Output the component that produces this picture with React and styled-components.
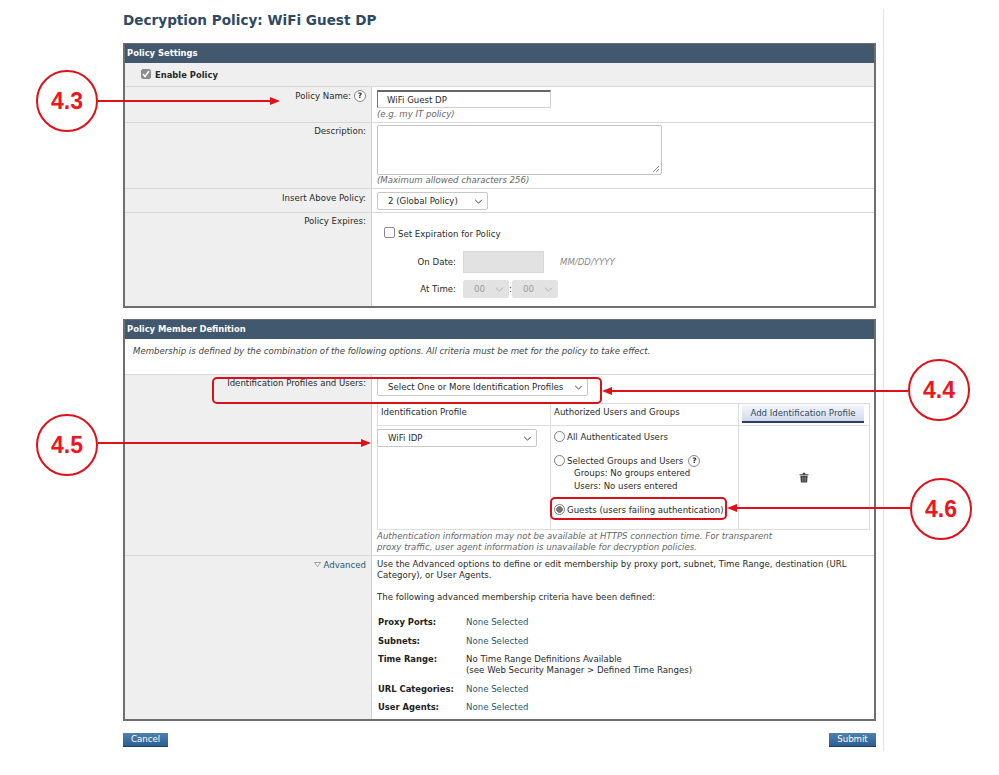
import React from "react";
import styled, { createGlobalStyle } from "styled-components";

const GlobalStyle = createGlobalStyle`
  html, body {
    margin: 0;
    background: #fff;
  }
  body {
    font-family: "DejaVu Sans", Verdana, sans-serif;
    font-size: 8.6px;
    color: #2a2a2a;
  }
`;

const Page = styled.div`
  position: relative;
  width: 999px;
  height: 775px;
  overflow: hidden;
`;

const Content = styled.div`
  width: 760px;
  min-height: 742px;
  margin-top: 9px;
  margin-left: 123px;
  border-right: 1px solid #e6e6e6;
  position: absolute;
`;

const Title = styled.h1`
  margin: 0 0 15px;
  padding-top: 3px;
  font-size: 13.6px;
  line-height: 16px;
  font-weight: bold;
  color: #2f4a63;
`;

const Panel = styled.section`
  width: 753px;
  box-sizing: border-box;
  border: 2px solid #6f6f6f;
  border-top-width: 1px;
  margin-bottom: ${(p) => p.$gap || 0}px;
`;

const PanelHead = styled.div`
  height: 19px;
  line-height: 19px;
  padding-left: 2px;
  background: #42586f;
  color: #fff;
  font-weight: bold;
  font-size: 8.4px;
`;

const EnableRow = styled.div`
  height: 24px;
  display: flex;
  align-items: center;
  gap: 4px;
  padding-left: 16px;
  padding-top: 1px;
  background: #efefef;
  border-bottom: 1px solid #d8d8d8;
  font-weight: bold;
  font-size: 8.4px;
  box-sizing: border-box;
`;

const Row = styled.div`
  display: grid;
  grid-template-columns: 247px 1fr;
  grid-template-rows: minmax(0, 1fr);
  height: ${(p) => p.$h}px;
  box-sizing: border-box;
  border-bottom: ${(p) => (p.$last ? "none" : "1px solid #d8d8d8")};
`;

const Label = styled.div`
  background: #efefef;
  border-right: 1px solid #d0d0d0;
  text-align: right;
  padding: ${(p) => p.$top || 3}px 5px 0 0;
  line-height: 11px;
  white-space: nowrap;
`;

const Field = styled.div`
  background: #fff;
  padding: ${(p) => p.$top ?? 3}px 5px 0;
  line-height: 11px;
  min-width: 0;
`;

const Help = styled.span`
  display: inline-flex;
  align-items: center;
  justify-content: center;
  width: 10px;
  height: 10px;
  margin-left: 3px;
  border: 1px solid #888;
  border-radius: 50%;
  background: #fff;
  font-size: 7.5px;
  font-weight: bold;
  line-height: 1;
  vertical-align: 1px;
`;

const NameBox = styled.div`
  width: 174px;
  height: 18px;
  line-height: 17px;
  box-sizing: border-box;
  padding-left: 9px;
  border: 1px solid #d0d0d0;
  border-top: 2px solid #666;
  border-left-color: #777;
`;

const Hint = styled.div`
  color: #666;
  font-style: italic;
  margin-top: ${(p) => p.$top ?? 0}px;
  line-height: 11px;
`;

const TextBox = styled.div`
  width: 285px;
  height: 50px;
  box-sizing: border-box;
  border: 1px solid #c4c4c4;
  border-radius: 2px;
  position: relative;
`;

const Grip = styled.svg`
  position: absolute;
  right: 1px;
  bottom: 1px;
`;

const Select = styled.div`
  display: flex;
  align-items: center;
  justify-content: space-between;
  box-sizing: border-box;
  width: ${(p) => p.$w}px;
  height: 18px;
  margin-left: ${(p) => p.$ml || 0}px;
  padding: 0 4px 0 10px;
  background: ${(p) => (p.$off ? "#e2e2e2" : "#fff")};
  color: ${(p) => (p.$off ? "#9a9a9a" : "#2a2a2a")};
  border: 1px solid ${(p) => (p.$off ? "#e2e2e2" : "#c8c8c8")};
  border-radius: 2px;
`;

const Chevron = ({ color = "#333" }) => (
  <svg width="9" height="5" viewBox="0 0 10 6">
    <path d="M1 1l4 4 4-4" fill="none" stroke={color} strokeWidth="1.1" />
  </svg>
);

const CheckLine = styled.div`
  display: flex;
  align-items: center;
  gap: 3px;
  padding-left: 7px;
  height: 14px;
  margin-bottom: 10px;
`;

const Check = styled.span`
  display: inline-flex;
  align-items: center;
  justify-content: center;
  width: ${(p) => (p.$on ? 10 : 11)}px;
  height: ${(p) => (p.$on ? 10 : 11)}px;
  margin-top: -3px;
  border-radius: 2px;
  box-sizing: border-box;
  background: ${(p) => (p.$on ? "#8d8d8d" : "#fff")};
  border: 1px solid ${(p) => (p.$on ? "#8d8d8d" : "#8a8a8a")};
`;

const DateLine = styled.div`
  display: flex;
  align-items: center;
  height: ${(p) => p.$h}px;
  margin-bottom: ${(p) => p.$mb || 0}px;
`;

const DateLabel = styled.span`
  width: 86px;
  text-align: right;
  padding-right: 7px;
  box-sizing: border-box;
`;

const DateBox = styled.div`
  width: 81px;
  height: 22px;
  background: #e2e2e2;
  border: 1px solid #d8d8d8;
  box-sizing: border-box;
`;

const DateFmt = styled.span`
  margin-left: 16px;
  color: #8a8a8a;
  font-style: italic;
`;

const Colon = styled.span`
  width: 3px;
  text-align: center;
`;

const Intro = styled.div`
  height: 36px;
  box-sizing: border-box;
  padding: 7px 8px;
  line-height: 11px;
  font-style: italic;
  color: #444;
  border-bottom: 1px solid #d8d8d8;
`;

const Inner = styled.div`
  display: grid;
  grid-template-columns: 173px 188px 130px;
  grid-template-rows: 22px 103px;
  width: 493px;
  box-sizing: border-box;
  margin-top: 7px;
  border: 1px solid #dcdcdc;
`;

const Cell = styled.div`
  box-sizing: border-box;
  padding: ${(p) => p.$pad || "0 3px"};
  border-right: ${(p) => (p.$end ? "none" : "1px solid #dcdcdc")};
  border-bottom: ${(p) => (p.$head ? "1px solid #dcdcdc" : "none")};
  line-height: 12px;
`;

const Trash = styled(Cell)`
  display: flex;
  align-items: center;
  justify-content: center;
`;

const AddButton = styled.div`
  height: 18px;
  line-height: 17px;
  margin-top: 1px;
  text-align: center;
  color: #2f4a63;
  background: linear-gradient(#f4f6fb, #d2d9ec);
  border-bottom: 2px solid #2b3a66;
  box-sizing: border-box;
`;

const RadioLine = styled.div`
  display: flex;
  align-items: center;
  gap: 2px;
  height: 13px;
  margin-top: ${(p) => p.$top || 0}px;
`;

const Radio = styled.span`
  width: 11px;
  height: 11px;
  box-sizing: border-box;
  border-radius: 50%;
  border: 1px solid #808080;
  background: ${(p) => (p.$on ? "radial-gradient(circle, #777 0 3px, #fff 3.6px)" : "#fff")};
  flex: none;
`;

const SubLine = styled.div`
  padding-left: 20px;
  line-height: 12.5px;
`;

const Para = styled.p`
  margin: ${(p) => p.$mt || 0}px 0 ${(p) => p.$mb || 0}px;
  line-height: 11px;
`;

const Advanced = styled.span`
  color: #1d5a70;
`;

const Tri = styled.svg`
  margin-right: 3px;
  vertical-align: 1px;
`;

const Criteria = styled.div`
  display: grid;
  grid-template-columns: 88px 1fr;
  row-gap: 7.5px;
  padding-left: 1px;
  line-height: 11px;
`;

const CritName = styled.div`
  font-weight: bold;
  font-size: 8.4px;
  color: #222;
`;

const CritLink = styled.div`
  color: #1d5a70;
`;

const Actions = styled.div`
  width: 753px;
  display: flex;
  justify-content: space-between;
  margin-top: 12px;
`;

const ActionButton = styled.div`
  height: 14px;
  width: ${(p) => p.$w}px;
  line-height: 13px;
  text-align: center;
  color: #fff;
  background: linear-gradient(#4f80b0, #2c5f92);
  border-bottom: 1px solid #1f3f66;
  box-sizing: border-box;
`;

const Callout = styled.div`
  position: absolute;
  left: ${(p) => p.$x - 31}px;
  top: ${(p) => p.$y - 31}px;
  width: 62px;
  height: 62px;
  box-sizing: border-box;
  display: flex;
  align-items: center;
  justify-content: center;
  border: 2px solid #e0101a;
  border-radius: 50%;
  background: #fff;
  color: #ee1520;
  font-family: "Liberation Sans", Arial, sans-serif;
  font-weight: bold;
  font-size: 23px;
`;

const Outline = styled.div`
  position: absolute;
  left: ${(p) => p.$x}px;
  top: ${(p) => p.$y}px;
  width: ${(p) => p.$w}px;
  height: ${(p) => p.$h}px;
  box-sizing: border-box;
  border: 2px solid #d8101a;
  border-radius: 5px;
`;

const ArrowLayer = styled.svg`
  position: absolute;
  left: 0;
  top: 0;
  pointer-events: none;
`;

const arrows = ["M98 101H272", "M98 443H361", "M908 391H610", "M910 508H737"];

const heads = [
  "M280 101l-10-4v8z",
  "M371 443l-10-4v8z",
  "M602 391l10-4v8z",
  "M727 508l10-4v8z",
];

const TickMark = () => (
  <svg width="8" height="8" viewBox="0 0 8 8">
    <path d="M1 4l2 2.4L7 1" fill="none" stroke="#fff" strokeWidth="1.6" />
  </svg>
);

export default function App() {
  return (
    <Page>
      <GlobalStyle />
      <Content>
        <Title>Decryption Policy: WiFi Guest DP</Title>

        <Panel $gap={11}>
          <PanelHead>Policy Settings</PanelHead>
          <EnableRow>
            <Check $on>
              <TickMark />
            </Check>
            Enable Policy
          </EnableRow>
          <Row $h={36}>
            <Label>
              Policy Name:
              <Help>?</Help>
            </Label>
            <Field>
              <NameBox>WiFi Guest DP</NameBox>
              <Hint $top={1}>(e.g. my IT policy)</Hint>
            </Field>
          </Row>
          <Row $h={66}>
            <Label>Description:</Label>
            <Field $top={2}>
              <TextBox>
                <Grip width="8" height="8" viewBox="0 0 8 8">
                  <path d="M7 1L1 7M7 4L4 7" stroke="#777" strokeWidth="0.8" />
                </Grip>
              </TextBox>
              <Hint>(Maximum allowed characters 256)</Hint>
            </Field>
          </Row>
          <Row $h={24}>
            <Label $top={4}>Insert Above Policy:</Label>
            <Field>
              <Select $w={111}>
                2 (Global Policy)
                <Chevron />
              </Select>
            </Field>
          </Row>
          <Row $h={93} $last>
            <Label>Policy Expires:</Label>
            <Field $top={14}>
              <CheckLine>
                <Check />
                Set Expiration for Policy
              </CheckLine>
              <DateLine $h={22} $mb={7}>
                <DateLabel>On Date:</DateLabel>
                <DateBox />
                <DateFmt>MM/DD/YYYY</DateFmt>
              </DateLine>
              <DateLine $h={18}>
                <DateLabel>At Time:</DateLabel>
                <Select $w={46} $off>
                  00
                  <Chevron color="#aaa" />
                </Select>
                <Colon>:</Colon>
                <Select $w={46} $off>
                  00
                  <Chevron color="#aaa" />
                </Select>
              </DateLine>
            </Field>
          </Row>
        </Panel>

        <Panel>
          <PanelHead>Policy Member Definition</PanelHead>
          <Intro>
            Membership is defined by the combination of the following options. All criteria must be
            met for the policy to take effect.
          </Intro>
          <Row $h={181}>
            <Label>Identification Profiles and Users:</Label>
            <Field>
              <Select $w={211}>
                Select One or More Identification Profiles
                <Chevron />
              </Select>
              <Inner>
                <Cell $head $pad="2px 3px 0">Identification Profile</Cell>
                <Cell $head $pad="2px 3px 0">Authorized Users and Groups</Cell>
                <Cell $head $end $pad="0 5px 0 3px">
                  <AddButton>Add Identification Profile</AddButton>
                </Cell>
                <Cell $pad="3px 0 0 0">
                  <Select $w={160} $ml={-1}>
                    WiFi IDP
                    <Chevron />
                  </Select>
                </Cell>
                <Cell $pad="4px 3px 0">
                  <RadioLine>
                    <Radio />
                    All Authenticated Users
                  </RadioLine>
                  <RadioLine $top={11}>
                    <Radio />
                    Selected Groups and Users
                    <Help>?</Help>
                  </RadioLine>
                  <SubLine>Groups: No groups entered</SubLine>
                  <SubLine>Users: No users entered</SubLine>
                  <RadioLine $top={11}>
                    <Radio $on />
                    Guests (users failing authentication)
                  </RadioLine>
                </Cell>
                <Trash $end>
                  <svg width="10" height="11" viewBox="0 0 10 11">
                    <path d="M0.5 2.2h9v1h-9zM3.5 2.2l.5-1.4h2l.5 1.4z" fill="#444" />
                    <path d="M1.3 3.8h7.4l-.6 6.8H1.9z" fill="#444" />
                    <path d="M3.5 5v4.5M5 5v4.5M6.5 5v4.5" stroke="#999" strokeWidth="0.5" />
                  </svg>
                </Trash>
              </Inner>
              <Hint $top={1}>
                Authentication information may not be available at HTTPS connection time. For
                transparent
                <br />
                proxy traffic, user agent information is unavailable for decryption policies.
              </Hint>
            </Field>
          </Row>
          <Row $h={163} $last>
            <Label $top={4}>
              <Tri width="7" height="5" viewBox="0 0 7 5">
                <path d="M0.5 0.5h6L3.5 4.5z" fill="#fff" stroke="#778" strokeWidth="0.7" />
              </Tri>
              <Advanced>Advanced</Advanced>
            </Label>
            <Field>
              <Para>
                Use the Advanced options to define or edit membership by proxy port, subnet, Time
                Range, destination (URL
                <br />
                Category), or User Agents.
              </Para>
              <Para $mt={11} $mb={14}>
                The following advanced membership criteria have been defined:
              </Para>
              <Criteria>
                <CritName>Proxy Ports:</CritName>
                <CritLink>None Selected</CritLink>
                <CritName>Subnets:</CritName>
                <CritLink>None Selected</CritLink>
                <CritName>Time Range:</CritName>
                <div>
                  No Time Range Definitions Available
                  <br />
                  (see Web Security Manager &gt; Defined Time Ranges)
                </div>
                <CritName>URL Categories:</CritName>
                <CritLink>None Selected</CritLink>
                <CritName>User Agents:</CritName>
                <CritLink>None Selected</CritLink>
              </Criteria>
            </Field>
          </Row>
        </Panel>

        <Actions>
          <ActionButton $w={45}>Cancel</ActionButton>
          <ActionButton $w={47}>Submit</ActionButton>
        </Actions>
      </Content>

      <ArrowLayer width="999" height="775">
        {arrows.map((d) => (
          <path key={d} d={d} stroke="#e0101a" strokeWidth="2" fill="none" />
        ))}
        {heads.map((d) => (
          <path key={d} d={d} fill="#e0101a" />
        ))}
      </ArrowLayer>
      <Outline $x={212} $y={377} $w={390} $h={27} />
      <Outline $x={550} $y={497} $w={177} $h={23} />
      <Callout $x={67} $y={101}>4.3</Callout>
      <Callout $x={67} $y={445}>4.5</Callout>
      <Callout $x={939} $y={390}>4.4</Callout>
      <Callout $x={941} $y={509}>4.6</Callout>
    </Page>
  );
}
